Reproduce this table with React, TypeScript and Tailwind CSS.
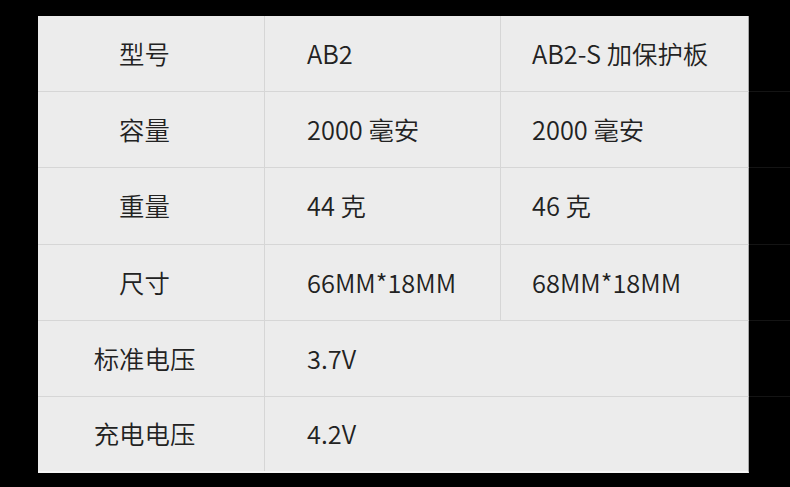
import React from "react";

const rows: { label: string; a: string; b?: string }[] = [
  { label: "型号", a: "AB2", b: "AB2-S 加保护板" },
  { label: "容量", a: "2000 毫安", b: "2000 毫安" },
  { label: "重量", a: "44 克", b: "46 克" },
  { label: "尺寸", a: "66MM*18MM", b: "68MM*18MM" },
  { label: "标准电压", a: "3.7V" },
  { label: "充电电压", a: "4.2V" },
];

export default function App() {
  return (
    <div
      className="w-[790px] h-[487px] bg-black pt-[16px] pl-[38px] overflow-hidden"
      style={{ fontFamily: '"Noto Sans CJK SC", "Noto Sans", sans-serif' }}
    >
      <div className="flex flex-col">
        {rows.map((r, i) => (
          <div key={i} className="flex">
            <div
              className={`flex w-[711px] h-[76.2px] bg-[#ececec] text-[#222] text-[25.4px] font-[350] border-r border-r-[#a8a8a8] ${
                i < rows.length - 1 ? "border-b border-b-[#d6d6d6]" : "border-b-2 border-b-[#f6f6f6]"
              }`}
            >
              <div className="w-[227px] shrink-0 flex items-center justify-center pr-[13px] pb-[1px] border-r border-[#d6d6d6]">
                {r.label}
              </div>
              {r.b !== undefined ? (
                <>
                  <div className="w-[236px] shrink-0 flex items-center pl-[42px] pb-[1px] border-r border-[#d6d6d6]">
                    {r.a}
                  </div>
                  <div className="flex-1 flex items-center pl-[31px] pb-[1px]">{r.b}</div>
                </>
              ) : (
                <div className="flex-1 flex items-center pl-[42px] pb-[1px]">{r.a}</div>
              )}
            </div>
            <div
              className={`flex-1 ${i < rows.length - 1 ? "border-b border-b-[#141414]" : ""}`}
            />
          </div>
        ))}
      </div>
    </div>
  );
}
